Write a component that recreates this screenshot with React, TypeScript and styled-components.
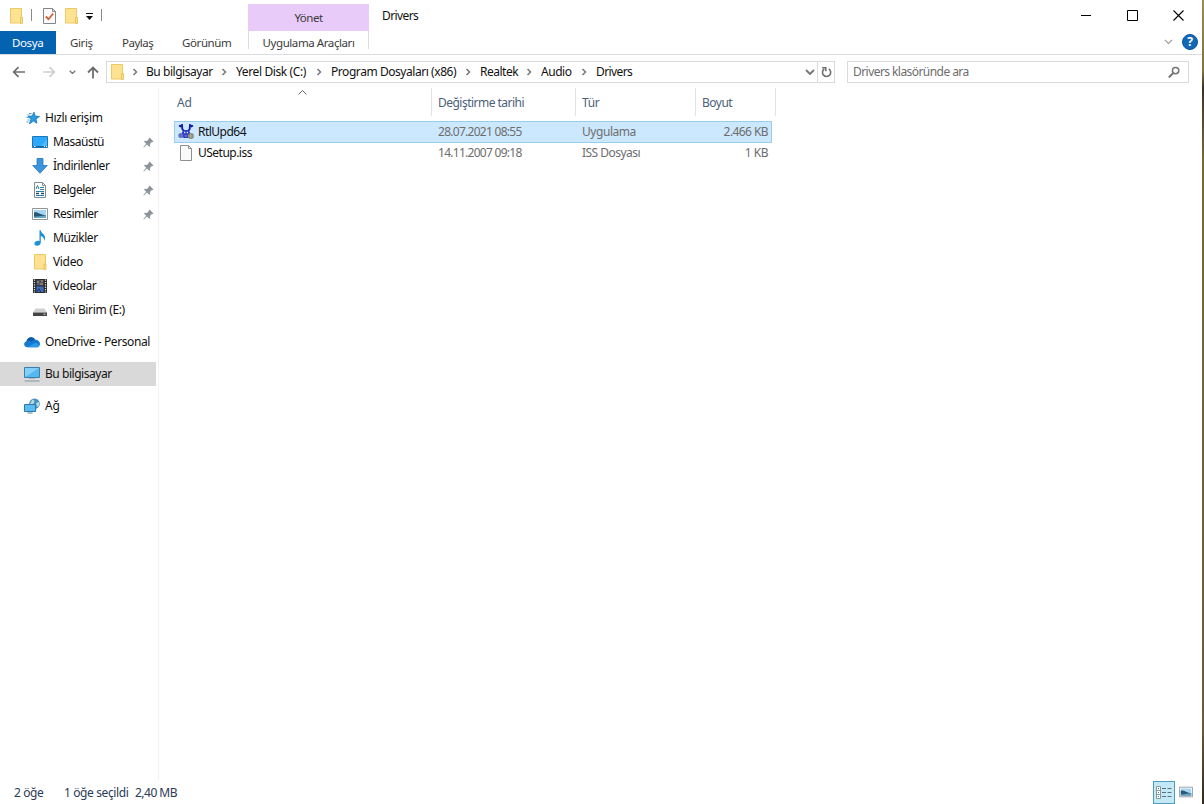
import React from "react";
import styled, { createGlobalStyle } from "styled-components";

const Global = createGlobalStyle`
  * { box-sizing: border-box; }
  body { margin: 0; background: #fff; overflow: hidden; }
`;

const Window = styled.div`
  width: 1204px;
  height: 804px;
  display: flex;
  flex-direction: column;
  background: #fff;
  border-right: 2px solid #8b7442;
  border-image: linear-gradient(#a08a50, #86703c 9%, #3e3120 11%, #7d683a 20%, #6e5a33 90%, #33281a) 1;
  border-width: 0 2px 0 0;
  font-family: "Noto Sans", "Open Sans", sans-serif;
  font-size: 12px;
  color: #111;
  white-space: nowrap;
`;

const Label = styled.span<{ $ls?: number; $up?: boolean }>`
  letter-spacing: ${(p) => p.$ls ?? -0.52}px;
  padding-bottom: ${(p) => (p.$up ? 2 : 0)}px;
`;

const Header = styled.header`
  height: 55px;
  flex: none;
  display: flex;
  border-bottom: 1px solid #dadbdc;
`;

const HeaderLeft = styled.div`
  width: 248px;
  display: flex;
  flex-direction: column;
`;

const QuickBar = styled.div`
  height: 31px;
  display: flex;
  align-items: center;
  padding-left: 10px;
  svg { flex: none; }
`;

const Divider = styled.span<{ $ml: number; $mr: number }>`
  width: 1px;
  height: 12px;
  background: #8a8a8a;
  margin: 0 ${(p) => p.$mr}px 1px ${(p) => p.$ml}px;
`;

const Gap = styled.span<{ $w: number }>`
  width: ${(p) => p.$w}px;
  flex: none;
`;

const Tabs = styled.div`
  height: 23px;
  display: flex;
  color: #3b3b3b;
  font-size: 11.500px;
`;

const Tab = styled.div<{ $w: number; $pl: number; $active?: boolean }>`
  width: ${(p) => p.$w}px;
  flex: none;
  padding-left: ${(p) => p.$pl}px;
  line-height: 24px;
  background: ${(p) => (p.$active ? "#0463b1" : "transparent")};
  color: ${(p) => (p.$active ? "#fff" : "inherit")};
`;

const Context = styled.div`
  width: 121px;
  padding-top: 4px;
  color: #3b3b3b;
  font-size: 11.500px;
  text-align: center;
`;

const ContextTitle = styled.div`
  height: 27px;
  line-height: 28px;
  background: #e9cbfa;
`;

const ContextTab = styled.div`
  height: 18px;
  line-height: 24px;
  border: solid #dcdcdc;
  border-width: 0 1px;
`;

const Title = styled.div`
  padding: 8px 0 0 13px;
  line-height: 16px;
  flex: 1;
`;

const HeaderRight = styled.div`
  width: 130px;
  display: flex;
  flex-direction: column;
  align-items: flex-end;
`;

const WindowButtons = styled.div`
  height: 30px;
  display: flex;
  align-items: center;
  gap: 35px;
  padding: 0 18px 0 0;
`;

const RibbonButtons = styled.div`
  height: 24px;
  display: flex;
  align-items: center;
  gap: 9px;
  padding-right: 4px;
`;

const AddressRow = styled.div`
  height: 33px;
  flex: none;
  display: flex;
  padding-top: 6px;
`;

const NavButtons = styled.div`
  width: 106px;
  height: 22px;
  display: flex;
  align-items: center;
  padding-left: 12px;
`;

const AddressBox = styled.div`
  width: 729px;
  height: 22px;
  display: flex;
  align-items: center;
  border: 1px solid #d9d9d9;
  padding-left: 4px;
`;

const Crumb = styled.div<{ $w: number }>`
  width: ${(p) => p.$w}px;
  flex: none;
  display: flex;
  align-items: center;
  justify-content: space-between;
`;

const AddressEnd = styled.div`
  margin-left: auto;
  height: 20px;
  display: flex;
  align-items: center;
`;

const Refresh = styled.div`
  width: 17px;
  height: 20px;
  margin-left: 2px;
  display: flex;
  align-items: center;
  justify-content: center;
  border-left: 1px solid #d9d9d9;
`;

const SearchBox = styled.div`
  width: 342px;
  height: 22px;
  margin-left: 12px;
  display: flex;
  align-items: center;
  justify-content: space-between;
  border: 1px solid #d9d9d9;
  padding: 0 8px 0 5px;
  color: #6d6d6d;
`;

const Main = styled.main`
  flex: 1;
  display: flex;
  min-height: 0;
`;

const Sidebar = styled.nav`
  width: 159px;
  border-right: 1px solid #f3f3f3;
  padding-top: 18px;
`;

const SideItem = styled.div<{ $indent: number; $top?: number; $selected?: boolean }>`
  width: 156px;
  height: 24px;
  margin-top: ${(p) => p.$top ?? 0}px;
  padding: 0 2px 0 ${(p) => p.$indent}px;
  display: flex;
  align-items: center;
  gap: 5px;
  background: ${(p) => (p.$selected ? "#d9d9d9" : "transparent")};
  svg { flex: none; }
`;

const Pin = styled.span`
  margin-left: auto;
  display: flex;
`;

const Files = styled.section`
  width: 617px;
  padding-left: 15px;
`;

const Columns = styled.div`
  display: flex;
  height: 28px;
  line-height: 30px;
  color: #4c607a;
`;

const Column = styled.div<{ $w: number; $pl: number }>`
  width: ${(p) => p.$w}px;
  flex: none;
  display: flex;
  padding-left: ${(p) => p.$pl}px;
  border-right: 1px solid #e3e3e3;
`;

const SortMark = styled.span`
  margin-left: 106px;
  line-height: 0;
  padding-top: 2px;
`;

const FileRow = styled.div<{ $selected?: boolean }>`
  width: 598px;
  height: ${(p) => (p.$selected ? 22 : 21)}px;
  margin-top: ${(p) => (p.$selected ? 5 : 0)}px;
  display: flex;
  align-items: center;
  padding: 0 3px;
  border: ${(p) => (p.$selected ? "1px solid #99cdea" : "solid transparent")};
  border-width: ${(p) => (p.$selected ? "1px" : "0 1px")};
  background: ${(p) => (p.$selected ? "#cce8ff" : "transparent")};
  color: #6d6d6d;
  svg { margin-bottom: ${(p) => (p.$selected ? 0 : 2)}px; }
`;

const NameCell = styled.div`
  width: 260px;
  display: flex;
  align-items: center;
  gap: 4px;
  color: #111;
`;

const Cell = styled.div<{ $w: number; $right?: boolean }>`
  width: ${(p) => p.$w}px;
  display: flex;
  justify-content: ${(p) => (p.$right ? "flex-end" : "flex-start")};
`;

const StatusBar = styled.footer`
  height: 24px;
  flex: none;
  display: flex;
  align-items: center;
  padding: 0 9px 0 14px;
  color: #2b3a55;
`;

const StatusText = styled.span<{ $w: number }>`
  width: ${(p) => p.$w}px;
`;

const ViewButtons = styled.div`
  margin-left: auto;
  display: flex;
  align-items: center;
  gap: 4px;
`;

const ViewActive = styled.div`
  width: 22px;
  height: 23px;
  display: flex;
  align-items: center;
  justify-content: center;
  border: 1px solid #4d9dbd;
  background: #c4e9f6;
`;

const FolderIcon = () => (
  <svg width="13" height="16" viewBox="0 0 13 16">
    <path d="M.5.5h11v14.500H.5z" fill="#fde391" stroke="#ecc965" />
    <path d="M10.500 9.500h2v6h-2z" fill="#fbe08a" stroke="#e2bd55" strokeWidth=".8" />
  </svg>
);

const CheckDocIcon = () => (
  <svg width="13" height="16" viewBox="0 0 13 16">
    <path d="M.5.5h9l3 3v12H.5z" fill="#fafafa" stroke="#858585" />
    <path d="M9.500.5v3h3" fill="none" stroke="#858585" />
    <path d="M2.800 8.500l2.700 2.700 4.700-5.700" fill="none" stroke="#cf6135" strokeWidth="1.800" />
  </svg>
);

const CrumbArrow = () => (
  <svg width="6" height="8" viewBox="0 0 6 8">
    <path d="M1.500 1l3 3-3 3" fill="none" stroke="#777" strokeWidth="1.500" />
  </svg>
);

const ChevronDown = ({ w = 10, color = "#777", sw = 1.9 }: { w?: number; color?: string; sw?: number }) => (
  <svg width={w} height={w * 0.6} viewBox="0 0 10 6">
    <path d="M1 1l4 4 4-4" fill="none" stroke={color} strokeWidth={sw} />
  </svg>
);

const Arrow = ({ color }: { color: string }) => (
  <svg width="14" height="12" viewBox="0 0 14 12">
    <path d="M13 6H2M6.500 1.200L1.700 6l4.800 4.800" fill="none" stroke={color} strokeWidth="1.700" />
  </svg>
);

const FlippedArrow = styled.span`
  display: flex;
  transform: scaleX(-1);
`;

const UpArrow = () => (
  <svg width="12" height="13" viewBox="0 0 12 13">
    <path d="M6 12.500V2M1 6.500l5-5 5 5" fill="none" stroke="#6e6e6e" strokeWidth="1.800" />
  </svg>
);

const SearchIcon = () => (
  <svg width="12" height="12" viewBox="0 0 12 12">
    <circle cx="7.600" cy="4.600" r="3.200" fill="none" stroke="#737373" strokeWidth="1.500" />
    <path d="M5.300 7L.8 11.500" stroke="#737373" strokeWidth="1.900" />
  </svg>
);

const RefreshIcon = () => (
  <svg width="11" height="12" viewBox="0 0 11 12">
    <path d="M7.800 2.900A4.100 4.100 0 1 1 3.200 3" fill="none" stroke="#6e6e6e" strokeWidth="1.600" />
    <path d="M1.200 1.700h3.600v3.600" fill="none" stroke="#6e6e6e" strokeWidth="1.500" />
  </svg>
);

const PinIcon = () => (
  <svg width="11" height="11" viewBox="0 0 11 11">
    <path d="M6.600.6l3.800 3.800-.9.9-.7-.2-1.900 1.900.2 1.900-.9.900-2.200-2.200L.8 10.500l-.4-.4 2.800-3.300L1.100 4.700l.9-.9 1.900.2 2-1.900-.2-.7z" fill="#8b949c" />
  </svg>
);

const StarIcon = () => (
  <svg width="16" height="16" viewBox="0 0 16 16">
    <path d="M10 2.200l1 3.800 4.500.5-3.500 2.400.9 4.400-3.500-2.200-4 2.700 1.500-4.600L4 6.300l4-.3z" fill="#2a9be0" stroke="#1b74b2" strokeWidth=".8" />
    <path d="M5 3.500h2.500M3.500 5h2M2.500 7.500h2.500M3.500 10h2M2.500 12h2" stroke="#4ba3dc" strokeWidth="1" />
  </svg>
);

const DesktopIcon = () => (
  <svg width="16" height="16" viewBox="0 0 16 16">
    <path d="M.5 2.500h15v11H.5z" fill="#2da8f8" stroke="#1778b9" />
    <path d="M8 13L15 5v8z" fill="#52baff" />
    <path d="M1 12.500h14" stroke="#12679f" />
    <path d="M2 12.500h1.500M12 12.500h1M14 12.500h1" stroke="#fff" />
  </svg>
);

const DownloadIcon = () => (
  <svg width="16" height="16" viewBox="0 0 16 16">
    <path d="M5 .5h6v7h4.300L8 15.300.7 7.500H5z" fill="#3b93dc" stroke="#2877b8" strokeWidth=".8" />
  </svg>
);

const DocumentIcon = () => (
  <svg width="16" height="16" viewBox="0 0 16 16">
    <path d="M2.500.5h8l3 3v12h-11z" fill="#fff" stroke="#7f8c96" />
    <path d="M10.500.5v3h3" fill="none" stroke="#7f8c96" />
    <path d="M4 7l1.500-3.500L7 7M8 5.500h4M8 7.500h4M4 9.500h8M4 13.500h8" fill="none" stroke="#2c7ca8" />
    <path d="M4 11.500h3M9 11.500h3" stroke="#1f4f73" strokeWidth="1.300" />
  </svg>
);

const PictureIcon = ({ w = 16 }: { w?: number }) => (
  <svg width={w} height={w} viewBox="0 0 16 16">
    <path d="M.5 2.500h15v11H.5z" fill="#fff" stroke="#8d969d" />
    <path d="M2 4h12v8H2z" fill="#a6d4f2" />
    <path d="M2 6.500c3-1 5 1.500 12 3V12H2z" fill="#285877" />
    <path d="M2 10.800l12-1.300V12H2z" fill="#6ba5c2" />
  </svg>
);

const MusicIcon = () => (
  <svg width="16" height="16" viewBox="0 0 16 16">
    <path d="M7.500.3h1.300c.2 3 4.200 4 4.300 7.200 0 1.400-.5 2.500-1.100 3.300.4-3-1.500-4.300-3.200-4.800v6.500c0 1.700-1.500 3.200-3.700 3.200-1.700 0-2.700-.8-2.700-2 0-1.900 2.600-3.300 5.100-2.800z" fill="#1e90d8" />
  </svg>
);

const SideFolderIcon = () => (
  <svg width="16" height="16" viewBox="0 0 16 16">
    <path d="M2.500.5h11v14.500h-11z" fill="#fde391" stroke="#ecc965" />
    <path d="M12 10h2v5.500h-2z" fill="#fbe08a" stroke="#e2bd55" strokeWidth=".8" />
  </svg>
);

const FilmIcon = () => (
  <svg width="16" height="16" viewBox="0 0 16 16">
    <path d="M1 1h14v14H1z" fill="#2b2b2b" />
    <path d="M2.500 1.500v13M13.500 1.500v13" stroke="#e6e6e6" strokeWidth="1.200" strokeDasharray="1.200 1.200" />
    <path d="M4.500 2h7v5.500h-7z" fill="#4a4f6b" />
    <path d="M4.500 8.500h7V14h-7z" fill="#3f6cc0" />
    <path d="M5 4h2M9 3h2M8 6h3" stroke="#a98a55" strokeWidth="1.400" />
    <path d="M5 6h2.500M8 11l3 2.500" stroke="#3f74c8" strokeWidth="1.200" />
    <path d="M5 13l2-2 2 3" fill="none" stroke="#243a6b" strokeWidth="1.200" />
  </svg>
);

const DriveIcon = () => (
  <svg width="16" height="16" viewBox="0 0 16 16">
    <path d="M3.500 6.500h9L15 10.500H1z" fill="#cfcfcf" />
    <path d="M1 10.500h14V14H1z" fill="#444" />
    <path d="M11.500 12.200h2" stroke="#b9e6c0" />
  </svg>
);

const CloudIcon = () => (
  <svg width="16" height="16" viewBox="0 0 16 16">
    <path d="M3.500 13.300C-.5 13-1 8.300 2.500 7.300 3.300 3 8.500 1.500 11 5.600c3 .2 5 2.200 5 4.500 0 2-1.500 3.200-3.200 3.200z" fill="#1479cf" />
    <path d="M2.500 7.300C3.300 3 8.500 1.500 11 5.600 9.500 5.800 8.800 6.500 8 7.500 6 6.500 4 6.600 2.500 7.300z" fill="#0a5cab" />
    <path d="M3.500 13.300L12 8.500l3.500 3.300c-.6 1-1.500 1.500-2.700 1.500z" fill="#2a9be9" />
  </svg>
);

const ComputerIcon = () => (
  <svg width="16" height="16" viewBox="0 0 16 16">
    <path d="M.5 1.500h15v10H.5z" fill="#55b7f2" stroke="#3b7ea8" />
    <path d="M1 11V2h14z" fill="#82cffa" />
    <path d="M.5 15h15" stroke="#8096a3" strokeWidth="1" />
    <path d="M5 12.500h6" stroke="#a9bac5" />
  </svg>
);

const NetworkIcon = () => (
  <svg width="16" height="16" viewBox="0 0 16 16">
    <circle cx="10.500" cy="5.800" r="5.300" fill="#4690bd" />
    <path d="M8 2c2-1 3 1 2 3s-3 2-4 1zM12 5l3-1v4l-2 1z" fill="#b4d8e3" />
    <path d="M.5 6.500h11v7H.5z" fill="#5bbcf4" stroke="#2f78a8" />
    <path d="M3.500 15h5" stroke="#5d8199" />
  </svg>
);

const SetupIcon = () => (
  <svg width="16" height="16" viewBox="0 0 16 16">
    <path d="M1 1.500l1.500.8L4 1l.3 4L6.500 8M15 1.500l-1.500.8L12 1l-.3 4L9.500 8" fill="none" stroke="#171d9e" strokeWidth="1.900" />
    <path d="M4 8l2-2h4l2 2v5l-2 1H6l-2-1z" fill="#2a3dc4" />
    <circle cx="2.800" cy="11.500" r="2.500" fill="#6470c0" />
    <path d="M6 8.500h1.300M8.700 8.500H10" stroke="#dfe4ff" strokeWidth="1.300" />
    <path d="M6 11.500l2 1.500 1.500-1.500z" fill="#7d9ff0" />
    <circle cx="12.800" cy="12" r="3" fill="#7d7f78" />
    <path d="M12.800 9.200v5.600M10 12h5.600" stroke="#bcbc98" strokeWidth=".8" />
  </svg>
);

const FileIcon = () => (
  <svg width="16" height="16" viewBox="0 0 16 16">
    <path d="M2.500.5h8l3 3v12h-11z" fill="#fafafa" stroke="#8f8f8f" />
    <path d="M10.500.5v3h3" fill="none" stroke="#8f8f8f" />
  </svg>
);

const DetailsIcon = () => (
  <svg width="16" height="13" viewBox="0 0 16 13">
    <path d="M.5.5h4v12h-4zM.5 4.500h4M.5 8.500h4" fill="#fff" stroke="#8b979e" />
    <path d="M2 2.500h1M2 6.500h1M2 10.500h1M6 2.500h4M11.500 2.500h4M6 6.500h4M11.500 6.500h4M6 10.500h4M11.500 10.500h4" stroke="#5b717c" />
  </svg>
);

const crumbs = [
  { text: "Bu bilgisayar", w: 81, ls: -0.46 },
  { text: "Yerel Disk (C:)", w: 86, ls: -0.38 },
  { text: "Program Dosyaları (x86)", w: 140, ls: -0.44 },
  { text: "Realtek", w: 52, ls: -0.5 },
  { text: "Audio", w: 46, ls: -0.45 },
];

const quickItems = [
  { text: "Masaüstü", icon: <DesktopIcon />, pinned: true },
  { text: "İndirilenler", icon: <DownloadIcon />, pinned: true, ls: -0.48 },
  { text: "Belgeler", icon: <DocumentIcon />, pinned: true },
  { text: "Resimler", icon: <PictureIcon />, pinned: true },
  { text: "Müzikler", icon: <MusicIcon />, ls: -0.45 },
  { text: "Video", icon: <SideFolderIcon />, ls: -0.35 },
  { text: "Videolar", icon: <FilmIcon />, ls: -0.4 },
  { text: "Yeni Birim (E:)", icon: <DriveIcon />, ls: -0.34 },
];

export default function App() {
  return (
    <>
      <Global />
      <Window>
        <Header>
          <HeaderLeft>
            <QuickBar>
              <FolderIcon />
              <Divider $ml={8} $mr={11} />
              <CheckDocIcon />
              <Gap $w={9} />
              <FolderIcon />
              <Gap $w={8} />
              <svg width="7" height="8" viewBox="0 0 7 8">
                <path d="M0 1.500h7" stroke="#111" />
                <path d="M0 4h7L3.500 8z" fill="#111" />
              </svg>
              <Divider $ml={8} $mr={0} />
            </QuickBar>
            <Tabs>
              <Tab $w={56} $pl={12} $active><Label $ls={-0.4}>Dosya</Label></Tab>
              <Tab $w={52} $pl={14}><Label $ls={-0.4}>Giriş</Label></Tab>
              <Tab $w={60} $pl={14}><Label $ls={-0.5}>Paylaş</Label></Tab>
              <Tab $w={76} $pl={14}><Label $ls={-0.4}>Görünüm</Label></Tab>
            </Tabs>
          </HeaderLeft>
          <Context>
            <ContextTitle><Label $ls={-0.5}>Yönet</Label></ContextTitle>
            <ContextTab><Label $ls={-0.42}>Uygulama Araçları</Label></ContextTab>
          </Context>
          <Title><Label $ls={-0.6}>Drivers</Label></Title>
          <HeaderRight>
            <WindowButtons>
              <svg width="11" height="11"><path d="M0 5.500h10" stroke="#000" /></svg>
              <svg width="11" height="11"><path d="M.5.5h10v10H.5z" fill="none" stroke="#000" /></svg>
              <svg width="11" height="11"><path d="M.5.5l10 10M10.500.5l-10 10" stroke="#000" strokeWidth="1.100" /></svg>
            </WindowButtons>
            <RibbonButtons>
              <ChevronDown w={9} color="#999" sw={1.2} />
              <svg width="16" height="16" viewBox="0 0 16 16">
                <circle cx="8" cy="8" r="7.500" fill="#1268b8" stroke="#0b559c" />
                <text x="8" y="12.300" textAnchor="middle" fontSize="12" fontWeight="700" fill="#fff">?</text>
              </svg>
            </RibbonButtons>
          </HeaderRight>
        </Header>

        <AddressRow>
          <NavButtons>
            <Arrow color="#6e6e6e" />
            <Gap $w={16} />
            <FlippedArrow><Arrow color="#d0d0d0" /></FlippedArrow>
            <Gap $w={13} />
            <ChevronDown w={7} />
            <Gap $w={11} />
            <UpArrow />
          </NavButtons>
          <AddressBox>
            <FolderIcon />
            <Gap $w={8} />
            <CrumbArrow />
            <Gap $w={8} />
            {crumbs.map((c) => (
              <React.Fragment key={c.text}>
                <Crumb $w={c.w}>
                  <Label $up $ls={c.ls}>{c.text}</Label>
                  <CrumbArrow />
                </Crumb>
                <Gap $w={9} />
              </React.Fragment>
            ))}
            <Label $up $ls={-0.6}>Drivers</Label>
            <AddressEnd>
              <ChevronDown />
              <Refresh><RefreshIcon /></Refresh>
            </AddressEnd>
          </AddressBox>
          <SearchBox>
            <Label $up $ls={-0.56}>Drivers klasöründe ara</Label>
            <SearchIcon />
          </SearchBox>
        </AddressRow>

        <Main>
          <Sidebar>
            <SideItem $indent={24}><StarIcon /><Label $up $ls={-0.36}>Hızlı erişim</Label></SideItem>
            {quickItems.map((q) => (
              <SideItem key={q.text} $indent={32}>
                {q.icon}
                <Label $up $ls={q.ls}>{q.text}</Label>
                {q.pinned && <Pin><PinIcon /></Pin>}
              </SideItem>
            ))}
            <SideItem $indent={24} $top={8}><CloudIcon /><Label $up $ls={-0.4}>OneDrive - Personal</Label></SideItem>
            <SideItem $indent={24} $top={8} $selected><ComputerIcon /><Label $up $ls={-0.46}>Bu bilgisayar</Label></SideItem>
            <SideItem $indent={24} $top={8}><NetworkIcon /><Label $up $ls={-0.2}>Ağ</Label></SideItem>
          </Sidebar>
          <Files>
            <Columns>
              <Column $w={258} $pl={3}>
                <Label $ls={-0.2}>Ad</Label>
                <SortMark>
                  <svg width="9" height="5" viewBox="0 0 9 5"><path d="M.5 4.500l4-4 4 4" fill="none" stroke="#666" /></svg>
                </SortMark>
              </Column>
              <Column $w={144} $pl={6}><Label>Değiştirme tarihi</Label></Column>
              <Column $w={120} $pl={6}><Label $ls={-0.4}>Tür</Label></Column>
              <Column $w={80} $pl={6}><Label>Boyut</Label></Column>
            </Columns>
            <FileRow $selected>
              <NameCell><SetupIcon /><Label $up>RtlUpd64</Label></NameCell>
              <Cell $w={144}><Label $up $ls={-0.72}>28.07.2021 08:55</Label></Cell>
              <Cell $w={120}><Label $up $ls={-0.45}>Uygulama</Label></Cell>
              <Cell $w={66} $right><Label $up $ls={-0.58}>2.466 KB</Label></Cell>
            </FileRow>
            <FileRow>
              <NameCell><FileIcon /><Label $up>USetup.iss</Label></NameCell>
              <Cell $w={144}><Label $up $ls={-0.72}>14.11.2007 09:18</Label></Cell>
              <Cell $w={120}><Label $up>ISS Dosyası</Label></Cell>
              <Cell $w={66} $right><Label $up>1 KB</Label></Cell>
            </FileRow>
          </Files>
        </Main>

        <StatusBar>
          <StatusText $w={50}><Label $ls={-0.4}>2 öğe</Label></StatusText>
          <StatusText $w={71}><Label $ls={-0.38}>1 öğe seçildi</Label></StatusText>
          <StatusText $w={60}><Label>2,40 MB</Label></StatusText>
          <ViewButtons>
            <ViewActive><DetailsIcon /></ViewActive>
            <PictureIcon w={14} />
          </ViewButtons>
        </StatusBar>
      </Window>
    </>
  );
}
